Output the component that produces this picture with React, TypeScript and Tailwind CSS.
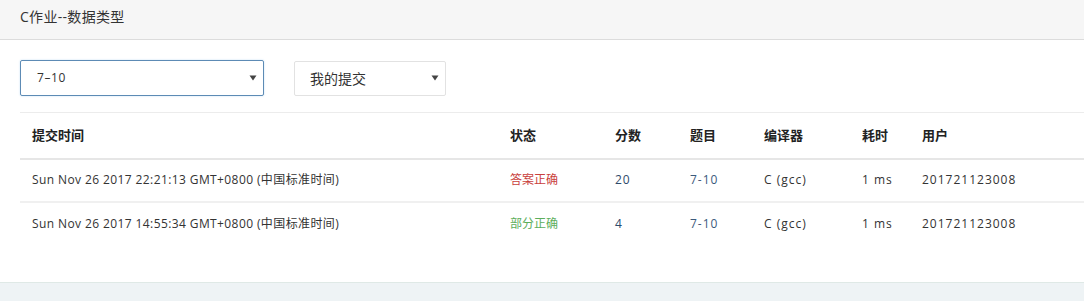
import React from "react";

const font = {
  fontFamily: '"Open Sans", "Noto Sans CJK SC", sans-serif',
};

type Row = {
  time: string;
  status: string;
  ok: boolean;
  score: string;
  problem: string;
  compiler: string;
  cost: string;
  user: string;
};

const rows: Row[] = [
  {
    time: "Sun Nov 26 2017 22:21:13 GMT+0800 (中国标准时间)",
    status: "答案正确",
    ok: true,
    score: "20",
    problem: "7-10",
    compiler: "C (gcc)",
    cost: "1 ms",
    user: "201721123008",
  },
  {
    time: "Sun Nov 26 2017 14:55:34 GMT+0800 (中国标准时间)",
    status: "部分正确",
    ok: false,
    score: "4",
    problem: "7-10",
    compiler: "C (gcc)",
    cost: "1 ms",
    user: "201721123008",
  },
];

function Caret() {
  return (
    <svg width="8" height="6" viewBox="0 0 8 6" className="shrink-0">
      <path d="M0.5 0.5 L7.5 0.5 L4 5.5 Z" fill="#444" />
    </svg>
  );
}

export default function App() {
  return (
    <div className="w-[1084px] h-[301px] overflow-hidden bg-[#eef3f5] text-[#333]" style={font}>
      <div className="bg-white border-b border-[#dfe9e6]">
        <div className="h-[40px] bg-[#f6f6f6] border-b border-[#dcdcdc] flex items-center pl-[20px]">
          <span className="text-[14px] text-[#333] tracking-[0.3px] -mt-[6px]">C作业--数据类型</span>
        </div>

        <div className="pl-[20px] pt-[20px]">
          <div className="flex items-center gap-[30px] h-[36px]">
            <div className="w-[244px] h-[36px] border border-[#5d8bb5] rounded-[2px] flex items-center justify-between pl-[16px] pr-[6px] shadow-[0_0_2px_rgba(102,175,233,0.4)]">
              <span className="text-[12px] text-[#333] tracking-[0.6px]">7–10</span>
              <Caret />
            </div>
            <div className="w-[152px] h-[35px] border border-[#e2e2e2] rounded-[2px] flex items-center justify-between pl-[15px] pr-[6px]">
              <span className="text-[14px] text-[#333]">我的提交</span>
              <Caret />
            </div>
          </div>

          <table className="mt-[16px] w-[1064px] border-collapse table-fixed text-[12px]">
            <colgroup>
              <col className="w-[478px]" />
              <col className="w-[105px]" />
              <col className="w-[75px]" />
              <col className="w-[74px]" />
              <col className="w-[98px]" />
              <col className="w-[60px]" />
              <col className="w-[174px]" />
            </colgroup>
            <thead>
              <tr className="h-[46px] border-t border-[#ececec] border-b-2 border-b-[#e6e6e6]">
                {["提交时间", "状态", "分数", "题目", "编译器", "耗时", "用户"].map((h) => (
                  <th key={h} className="text-left font-bold text-[13px] text-[#222] pl-[12px] align-middle">
                    {h}
                  </th>
                ))}
              </tr>
            </thead>
            <tbody className="tracking-[1px]">
              {rows.map((r, i) => (
                <tr key={i} className={i === 0 ? "h-[43px] border-b-2 border-[#f0f0f0]" : "h-[43px]"}>
                  <td className="pl-[12px] text-[#333] tracking-[0.4px]">{r.time}</td>
                  <td className={r.ok ? "pl-[12px] tracking-normal text-[#c9403c]" : "pl-[12px] tracking-normal text-[#5cae5c]"}>{r.status}</td>
                  <td className="pl-[12px] text-[#2d4a6a]">{r.score}</td>
                  <td className="pl-[12px] text-[#3c5a7c]">{r.problem}</td>
                  <td className="pl-[12px] text-[#333]">{r.compiler}</td>
                  <td className="pl-[12px] text-[#333]">{r.cost}</td>
                  <td className="pl-[12px] text-[#333]">{r.user}</td>
                </tr>
              ))}
            </tbody>
          </table>
          <div className="h-[37px]" />
        </div>
      </div>
    </div>
  );
}
